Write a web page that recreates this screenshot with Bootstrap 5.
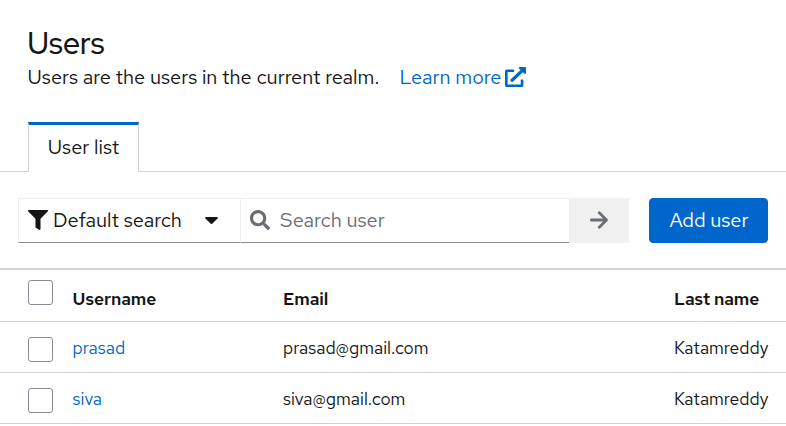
<!DOCTYPE html>
<html lang="en">
<head>
<meta charset="utf-8">
<meta name="viewport" content="width=device-width, initial-scale=1">
<title>Users</title>
<link href="https://cdn.jsdelivr.net/npm/bootstrap@5.3.0/dist/css/bootstrap.min.css" rel="stylesheet">
<style>
body{font-family:"Red Hat Text",Inter,"Open Sans",sans-serif;font-size:20px;line-height:30px;color:#151515;background:#fff;overflow:hidden}
a{color:#06c;text-decoration:none}
svg{display:block;flex:none;fill:currentColor}
.page-head{padding:24px 27.500px 0}
.page-head h1{font-family:"Red Hat Display",Inter,sans-serif;font-size:30px;line-height:38px;font-weight:500;letter-spacing:.1px}
.intro{height:30px}
.intro a{margin-left:20px}
.intro svg{margin-left:4px}
.nav-tabs{--bs-nav-tabs-border-color:#d2d2d2;margin-top:30px;padding-left:28px;height:50px}
.nav-tabs .nav-link,.nav-tabs .nav-link.active{width:111px;height:50px;padding:7px 0 0;border:1px solid #d2d2d2;border-top:3px solid #06c;border-bottom-color:#fff;border-radius:0;color:#151515;text-align:center}
.tools{padding:26px 18px 0;height:96px}
.search-box{width:611px;height:45px}
.filter-toggle{width:222px;padding:0 22px 0 9px;border:1px solid #f0f0f0;border-right:0;border-bottom-color:#8a8d90;color:#151515}
.filter-toggle span{margin-left:5px}
.filter-toggle span,.search-field input{position:relative;top:-1px}
.search-field{border:1px solid #f0f0f0;border-bottom-color:#8a8d90;border-right:0;padding-left:9px;color:#6a6e73}
.search-field svg,.filter-toggle svg:first-child{margin-top:-1px}
.search-field input{font-size:inherit;line-height:30px;height:30px;color:#151515;margin-left:10px}
.search-field input::placeholder{color:#6a6e73;opacity:1}
.go{width:60px;background:#f0f0f0;border:0;color:#6a6e73;padding-bottom:3px}
.btn-primary{--bs-btn-bg:#06c;--bs-btn-border-color:#06c;--bs-btn-border-radius:4px;width:119px;height:45px;padding:0 0 2px 1px;font-size:inherit;line-height:30px}
.users{table-layout:fixed;width:786px;font-size:17.5px;line-height:24px;border-top:2px solid #d2d2d2;--bs-table-color:#151515;--bs-table-bg:#fff}
.users>:not(caption)>*>*{padding:0;border-bottom:1px solid #d2d2d2}
.users th,.users td{height:51px;vertical-align:middle}
.users tbody td{padding-top:2px!important}
.users th:nth-child(2),.users td:nth-child(2){padding-left:.6px!important}
.users thead th{height:52px;font-weight:600;letter-spacing:-.1px;vertical-align:bottom;padding-bottom:10px!important}
.users .form-check-input{display:block;width:25px;height:25px;margin:4px 0 0 28px;border:1px solid #8b8a9b;border-radius:3px}
.users thead .pick{vertical-align:top;padding:10px 0 0!important}
.users thead .form-check-input{margin-top:0}
</style>
<script src="https://cdn.jsdelivr.net/npm/bootstrap@5.3.0/dist/js/bootstrap.bundle.min.js"></script>
</head>
<body>
<header class="page-head">
  <h1 class="mb-0">Users</h1>
  <div class="intro d-flex align-items-center text-nowrap"><span>Users are the users in the current realm.</span><a href="#" class="d-flex align-items-center"><span>Learn more</span>
    <svg width="21" height="20" viewBox="0 0 512 512" preserveAspectRatio="none"><path d="M432 320h-32a16 16 0 0 0-16 16v112H64V128h144a16 16 0 0 0 16-16V80a16 16 0 0 0-16-16H48a48 48 0 0 0-48 48v352a48 48 0 0 0 48 48h352a48 48 0 0 0 48-48V336a16 16 0 0 0-16-16ZM488 0H360c-21.400 0-32 25.900-17 41l35.700 35.700L135 320.400a24 24 0 0 0 0 34L157.700 377a24 24 0 0 0 34 0L435.300 133.300 471 169c15 15 41 4.500 41-17V24a24 24 0 0 0-24-24Z"/></svg></a></div>
</header>
<ul class="nav nav-tabs">
  <li class="nav-item"><a class="nav-link active" href="#">User list</a></li>
</ul>
<div class="tools d-flex justify-content-between">
  <div class="search-box d-flex">
    <button type="button" class="filter-toggle bg-white d-flex align-items-center text-nowrap">
      <svg width="20" height="20" viewBox="0 0 512 512"><path d="M488 0H24C2.700 0-8 25.900 7 41l185 185v206c0 7.800 3.800 15.200 10.200 19.700l80 56c15.800 11 37.800-.2 37.800-19.700V226L505 41c15-15 4.300-41-17-41Z"/></svg>
      <span>Default search</span>
      <svg class="ms-auto" width="13" height="7" viewBox="0 0 13 7"><path d="M1 0h11c.8 0 1.200.8.600 1.400L7.200 6.700a1 1 0 0 1-1.400 0L.4 1.400C-.2.8.200 0 1 0Z"/></svg>
    </button>
    <div class="search-field d-flex flex-grow-1 align-items-center">
      <svg width="20" height="20" viewBox="0 0 512 512"><path d="M505 442.700 405.300 343c-4.500-4.500-10.600-7-17-7H372c27.600-35.300 44-79.700 44-128C416 93.100 322.900 0 208 0S0 93.100 0 208s93.100 208 208 208c48.300 0 92.700-16.400 128-44v16.300c0 6.400 2.500 12.500 7 17l99.700 99.700c9.400 9.400 24.600 9.400 33.900 0l28.300-28.300c9.400-9.400 9.400-24.600.1-34ZM208 336c-70.700 0-128-57.200-128-128 0-70.700 57.200-128 128-128 70.700 0 128 57.200 128 128 0 70.700-57.200 128-128 128Z"/></svg>
      <input class="form-control border-0 p-0 shadow-none" type="text" placeholder="Search user" aria-label="Search user">
    </div>
    <button type="button" class="go d-flex align-items-center justify-content-center" aria-label="Search"><svg width="18" height="18" viewBox="0 0 18 18"><path d="M1.400 9h15M9.300 1.800 16.500 9l-7.200 7.200" fill="none" stroke="currentColor" stroke-width="2.800" stroke-linecap="round" stroke-linejoin="round"/></svg></button>
  </div>
  <button type="button" class="btn btn-primary">Add user</button>
</div>
<table class="table users mb-0">
  <colgroup><col style="width:72px"><col style="width:211px"><col style="width:391px"><col></colgroup>
  <thead><tr><th class="pick"><input class="form-check-input" type="checkbox" aria-label="Select all"></th><th>Username</th><th>Email</th><th>Last name</th></tr></thead>
  <tbody>
    <tr><td><input class="form-check-input" type="checkbox" aria-label="Select prasad"></td><td><a href="#">prasad</a></td><td>prasad@gmail.com</td><td>Katamreddy</td></tr>
    <tr><td><input class="form-check-input" type="checkbox" aria-label="Select siva"></td><td><a href="#">siva</a></td><td>siva@gmail.com</td><td>Katamreddy</td></tr>
  </tbody>
</table>
</body>
</html>
